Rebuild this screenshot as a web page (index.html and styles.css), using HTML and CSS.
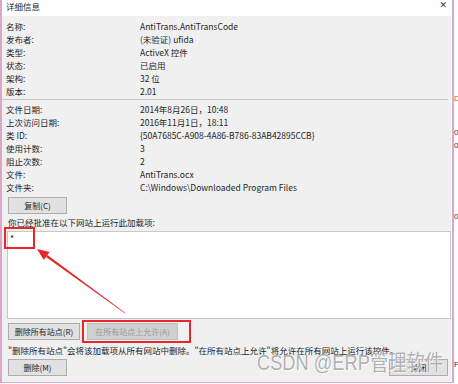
FILE: index.html
```html
<!DOCTYPE html>
<html lang="zh-CN">
<head>
<meta charset="utf-8">
<link rel="stylesheet" href="styles.css">
</head>
<body>
<div class="screen">
  <div class="dialog">
    <div class="titlebar">
      <span class="title">详细信息</span>
      <span class="close">✕</span>
    </div>
    <div class="body">
      <div class="grid first">
        <span>名称:</span><span>AntiTrans.AntiTransCode</span>
        <span>发布者:</span><span>(未验证) ufida</span>
        <span>类型:</span><span>ActiveX 控件</span>
        <span>状态:</span><span>已启用</span>
        <span>架构:</span><span>32 位</span>
        <span>版本:</span><span>2.01</span>
      </div>
      <div class="sep"></div>
      <div class="grid second">
        <span>文件日期:</span><span>2014年8月26日，10:48</span>
        <span>上次访问日期:</span><span>2016年11月1日，18:11</span>
        <span>类 ID:</span><span>{50A7685C-A908-4A86-B786-83AB42895CCB}</span>
        <span>使用计数:</span><span>3</span>
        <span>阻止次数:</span><span>2</span>
        <span>文件:</span><span>AntiTrans.ocx</span>
        <span>文件夹:</span><span>C:\Windows\Downloaded Program Files</span>
      </div>
      <button class="btn copy">复制(C)</button>
      <div class="label">你已经批准在以下网站上运行此加载项:</div>
      <div class="listbox">
        <span class="star">*</span>
        <span class="mark"></span>
      </div>
      <div class="btnrow">
        <button class="btn wide">删除所有站点(R)</button>
        <span class="marked"><button class="btn wide2 disabled">在所有站点上允许(A)</button></span>
      </div>
      <div class="note">"删除所有站点"会将该加载项从所有网站中删除。"在所有站点上允许"将允许在所有网站上运行该控件。</div>
      <div class="footer">
        <button class="btn copy">删除(M)</button>
        <button class="btn close-btn">关闭</button>
      </div>
    </div>
  </div>
  <div class="outside">
    <span class="frag f1">D</span>
    <span class="frag f2">0</span>
    <span class="frag f3">0</span>
    <span class="frag f4">0</span>
    <span class="frag f5">F</span>
  </div>
</div>
<svg class="arrow" width="458" height="384" viewBox="0 0 458 384">
  <polygon points="47.4,255.1 46.0,257.1 124.8,313.3 125.2,312.7" fill="#e8262b"/>
  <polygon points="37,249 49.6,252.0 43.8,260.1" fill="#e8262b"/>
</svg>
<div class="watermark">CSDN @ERP管理软件</div>
</body>
</html>
```

FILE: styles.css
```css
* { box-sizing: border-box; }
html, body {
  margin: 0;
  padding: 0;
  width: 458px;
  height: 384px;
  background: #ffffff;
  overflow: hidden;
}
body {
  position: relative;
  font-family: "Noto Sans CJK SC", "Noto Sans", sans-serif;
  font-size: 8.5px;
  color: #1e1e1e;
}
.screen {
  display: flex;
  height: 384px;
}
.dialog {
  width: 454px;
  height: 383px;
  border-left: 2px solid #dba7c6;
  border-right: 2px solid #dba7c6;
  border-bottom: 1px solid #dba7c6;
  background: #ffffff;
  display: flex;
  flex-direction: column;
}
.titlebar {
  height: 16px;
  display: flex;
  justify-content: space-between;
  padding: 0 5px 0 4px;
  line-height: 12px;
  background: #ffffff;
}
.title { font-size: 8.5px; }
.close { font-size: 9px; color: #333; line-height: 11px; font-family: "DejaVu Sans", sans-serif; }
.body {
  flex: 1;
  background: #f0f0f0;
  margin-right: 1px;
  padding: 4px 0 0 4px;
  display: flex;
  flex-direction: column;
}
.grid {
  display: grid;
  grid-template-columns: 134px auto;
  grid-auto-rows: 13px;
  line-height: 13px;
}
.grid.second { padding-top: 3px; }
.sep {
  height: 1px;
  background: #c9c9c9;
  margin: 1px 3px 0 -4px;
}
.btn {
  font-family: "Noto Sans CJK SC", "Noto Sans", sans-serif;
  font-size: 8px;
  color: #1e1e1e;
  background: #e1e1e1;
  border: 1px solid #adadad;
  height: 17px;
  padding: 0;
  line-height: 15px;
  white-space: nowrap;
}
.copy {
  width: 59px;
  margin-left: 2px;
  margin-top: 3px;
}
.label {
  line-height: 13px;
  margin-top: 2px;
  padding-left: 2px;
}
.listbox {
  position: relative;
  margin-top: 2px;
  margin-left: 1px;
  width: 444px;
  height: 88px;
  background: #ffffff;
  border: 1px solid #c8c8c8;
  padding: 0 0 0 2px;
  line-height: 12px;
}
.star { font-size: 9px; }
.mark {
  position: absolute;
  left: -4px;
  top: -5px;
  width: 31px;
  height: 22px;
  border: 2px solid #e8262b;
}
.btnrow {
  display: flex;
  gap: 7px;
  margin-top: 4px;
  padding-left: 2px;
}
.wide { width: 72px; }
.wide2 { width: 91px; }
.disabled {
  background: #d0d0d0;
  border-color: #c0c0c0;
  color: #9a9a9a;
}
.marked {
  position: relative;
  display: flex;
}
.marked::after {
  content: "";
  position: absolute;
  left: -5px;
  top: -3px;
  right: -13px;
  bottom: -3px;
  border: 2px solid #e8262b;
}
.note {
  line-height: 13px;
  margin-top: 4px;
  padding-left: 2px;
  white-space: nowrap;
}
.footer {
  display: flex;
  justify-content: space-between;
  margin-top: 2px;
  padding-right: 3px;
}
.footer .copy { margin-top: 0; }
.close-btn { width: 59px; }
.outside {
  flex: 1;
  position: relative;
  background: #ffffff;
}
.frag {
  position: absolute;
  left: 0;
  font-size: 8px;
  font-family: "Liberation Sans", sans-serif;
  color: #333;
}
.f1 { top: 94px; color: #b8662c; }
.f2 { top: 128px; }
.f3 { top: 141px; }
.f4 { top: 212px; }
.f5 { top: 360px; }
.arrow {
  position: absolute;
  left: 0;
  top: 0;
  pointer-events: none;
}
.watermark {
  position: absolute;
  left: 257px;
  top: 350px;
  font-family: "Liberation Sans", "Noto Sans CJK SC", sans-serif;
  font-size: 22px;
  line-height: 26px;
  color: rgba(110, 110, 110, 0.55);
  text-shadow: 0 0 1px #ffffff, 1px 1px 0 rgba(255,255,255,0.7);
  transform: scaleX(0.83);
  transform-origin: left top;
  white-space: nowrap;
}
```
